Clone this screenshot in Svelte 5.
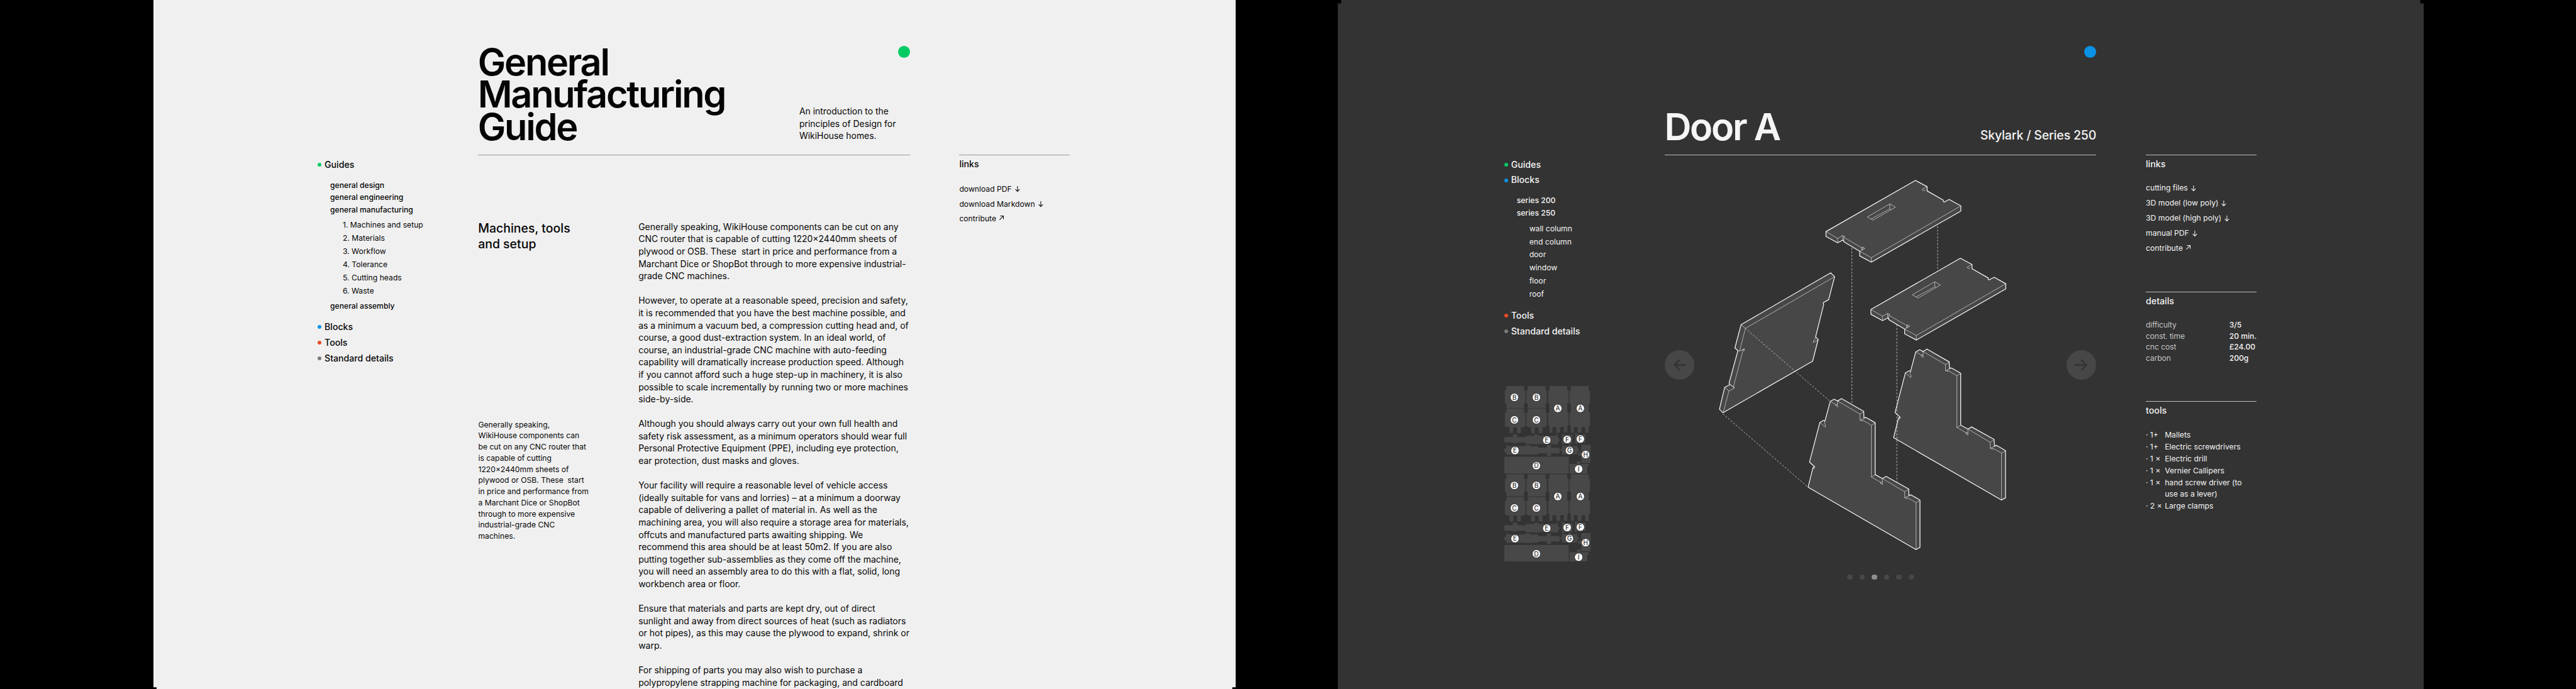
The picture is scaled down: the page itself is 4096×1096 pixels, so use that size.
<script>
  const guideNav = [
    {
      label: 'Guides',
      color: 'green',
      items: [
        { label: 'general design' },
        { label: 'general engineering' },
        {
          label: 'general manufacturing',
          items: ['1. Machines and setup', '2. Materials', '3. Workflow', '4. Tolerance', '5. Cutting heads', '6. Waste']
        },
        { label: 'general assembly' }
      ]
    },
    { label: 'Blocks', color: 'blue' },
    { label: 'Tools', color: 'red' },
    { label: 'Standard details', color: 'grey' }
  ];

  const blockNav = [
    { label: 'Guides', color: 'green' },
    {
      label: 'Blocks',
      color: 'blue',
      items: [
        { label: 'series 200' },
        { label: 'series 250', items: ['wall column', 'end column', 'door', 'window', 'floor', 'roof'] }
      ]
    },
    { label: 'Tools', color: 'red' },
    { label: 'Standard details', color: 'grey' }
  ];

  const guideLinks = [
    { label: 'download PDF', icon: 'down' },
    { label: 'download Markdown', icon: 'down' },
    { label: 'contribute', icon: 'out' }
  ];

  const blockLinks = [
    { label: 'cutting files', icon: 'down' },
    { label: '3D model (low poly)', icon: 'down' },
    { label: '3D model (high poly)', icon: 'down' },
    { label: 'manual PDF', icon: 'down' },
    { label: 'contribute', icon: 'out' }
  ];

  const details = [
    ['difficulty', '3/5'],
    ['const. time', '20 min.'],
    ['cnc cost', '£24.00'],
    ['carbon', '200g']
  ];

  const tools = [
    ['1+', 'Mallets'],
    ['1+', 'Electric screwdrivers'],
    ['1 ×', 'Electric drill'],
    ['1 ×', 'Vernier Callipers'],
    ['1 ×', 'hand screw driver (to use as a lever)'],
    ['2 ×', 'Large clamps']
  ];

  const paragraphs = [
    'Generally speaking, WikiHouse components can be cut on any CNC router that is capable of cutting 1220×2440mm sheets of plywood or OSB. These\u00a0 start in price and performance from a Marchant Dice or ShopBot through to more expensive industrial-grade CNC machines.',
    'However, to operate at a reasonable speed, precision and safety, it is recommended that you have the best machine possible, and as a minimum a vacuum bed, a compression cutting head and, of course, a good dust-extraction system. In an ideal world, of course, an industrial-grade CNC machine with auto-feeding capability will dramatically increase production speed. Although if you cannot afford such a huge step-up in machinery, it is also possible to scale incrementally by running two or more machines side-by-side.',
    'Although you should always carry out your own full health and safety risk assessment, as a minimum operators should wear full Personal Protective Equipment (PPE), including eye protection, ear protection, dust masks and gloves.',
    'Your facility will require a reasonable level of vehicle access (ideally suitable for vans and lorries) – at a minimum a doorway capable of delivering a pallet of material in. As well as the machining area, you will also require a storage area for materials, offcuts and manufactured parts awaiting shipping. We recommend this area should be at least 50m2. If you are also putting together sub-assemblies as they come off the machine, you will need an assembly area to do this with a flat, solid, long workbench area or floor.',
    'Ensure that materials and parts are kept dry, out of direct sunlight and away from direct sources of heat (such as radiators or hot pipes), as this may cause the plywood to expand, shrink or warp.',
    'For shipping of parts you may also wish to purchase a polypropylene strapping machine for packaging, and cardboard'
  ];

  const badges = [
    ['B', 149, 128], ['B', 304, 128], ['A', 455, 206], ['A', 614, 206], ['C', 149, 287], ['C', 304, 287],
    ['E', 377, 430], ['F', 521, 425], ['F', 614, 422], ['E', 153, 503], ['G', 537, 503], ['H', 651, 532],
    ['D', 304, 610], ['I', 602, 634]
  ];

  const slides = [0, 1, 2, 3, 4, 5];
  let current = $state(2);
</script>

{#snippet nav(sections)}
  <nav>
    {#each sections as section}
      <div class="section"><i class="dot {section.color}"></i>{section.label}</div>
      {#if section.items}
        <ul class="pages">
          {#each section.items as page}
            <li>
              <span>{page.label}</span>
              {#if page.items}
                <ul class="topics">
                  {#each page.items as topic}<li>{topic}</li>{/each}
                </ul>
              {/if}
            </li>
          {/each}
        </ul>
      {/if}
    {/each}
  </nav>
{/snippet}

{#snippet linkList(links)}
  <section class="card">
    <h3>links</h3>
    <ul class="links">
      {#each links as link}
        <li>
          <span>{link.label}</span>
          {#if link.icon === 'down'}
            <svg class="down" viewBox="0 0 12 14"><path d="M6 0V13M0.8 7.8L6 13L11.2 7.8" /></svg>
          {:else}
            <svg class="out" viewBox="0 0 11 11"><path d="M0.6 10.4L10 1M2 0.9H10.1V9" /></svg>
          {/if}
        </li>
      {/each}
    </ul>
  </section>
{/snippet}

{#snippet plate()}
  <path class="solid" d="M754 -316L1385 -677L1467 -633V-603L1581 -538V-530L1587 -524L1623 -543L1705 -497V-461L1074 -100L992 -144V-177L880 -244L875 -257L836 -237L754 -282Z" />
  <path class="thin" d="M754 -316L836 -268V-237M836 -268L872 -288V-257M872 -288L888 -281L880 -275V-246M880 -275L1005 -203V-187M1005 -203L1013 -207V-191L1005 -187M1013 -207L1028 -197L992 -177L1074 -132V-100M1074 -132L1705 -497" />
  <path class="thin" d="M1467 -633L1431 -612L1446 -603L1455 -610M1204 -511L1244 -488L1086 -396L1046 -419ZM1204 -511V-476L1072 -404M1204 -476L1214 -470" />
{/snippet}

{#snippet side()}
  <path class="solid" d="M784 882L812 866L836 879L863 862L1020 952L1022 998L1036 995L1101 1032V1398L1152 1426L1178 1411L1337 1499L1339 1546L1354 1541L1417 1578V1911L1389 1927L628 1487L662 1350L674 1343L638 1310L711 1030L738 1015L747 1020Z" />
  <path class="thin" d="M784 882L828 907M836 879V921L820 908L836 900M836 879L994 971L1020 955M994 971V1014L1010 1021V1012M994 1014L1036 995M1012 1013L1074 1050L1101 1034M1074 1050V1415L1101 1399M1074 1415L1146 1456M1152 1426V1469L1136 1457L1152 1448M1152 1426L1309 1519L1337 1501M1309 1519V1561L1325 1569V1560M1309 1561L1354 1541M1328 1561L1389 1596L1417 1580M1389 1596V1927" />
  <path class="thin" d="M711 1030L749 1063L751 1048L744 1040L747 1020M662 1350L671 1357L674 1343" />
{/snippet}

{#snippet sheet()}
  <path d="M92 48H217V76L227 81V171H217V204H92V171H82V81L92 76Z" />
  <path d="M92 208H217V236H227V331L217 333V339H195V374Q195 381 188 381H175Q168 381 168 374V345Q168 339 154 339Q140 339 140 345V374Q140 381 133 381H122Q115 381 115 374V339H92V333L82 331V236H92Z" />
  <path d="M243 48H369V76L378 81V171H369V204H243V171H234V81L243 76Z" />
  <path d="M243 208H369V236H378V331L369 333V339H347V374Q347 381 340 381H327Q320 381 320 374V345Q320 339 306 339Q292 339 292 345V374Q292 381 285 381H274Q267 381 267 374V339H243V333L234 331V236H243Z" />
  <path d="M396 48H522V78L531 81V171H522V235H531V325L522 330V377H498V348Q498 335 485 335Q471 335 471 348V377H444V348Q444 335 430 335Q417 335 417 348V377H396V330L387 325V235H396V171H387V81L396 78Z" />
  <path d="M547 48H673V78L682 81V171H673V235H682V325L673 330V377H649V348Q649 335 636 335Q622 335 622 348V377H595V348Q595 335 581 335Q568 335 568 348V377H547V330L538 325V235H547V171H538V81L547 78Z" />
  <path d="M78 408H138V389H168V408H228V399H288V390H318V399H442V390H455V415L466 418V437L455 440V460H442V457H318V460H288V457H228V446H168V451H138V446H78Z" />
  <path d="M78 490L92 487V465H106V473H228V465H258V473H318V484H378V465H408V484H468V522H408V540H378V522H318V531H258V534H228V531H106V534H92V517L78 513Z" />
  <path d="M484 386H498V393H558V456H498V462H484ZM576 381H590V390H651V448H590V457H576Z" />
  <path d="M485 470H530V462H550V470H592V487L602 492V506L592 510V530H485V510L476 506V492L485 489Z" />
  <path d="M620 463H686V591H620V540H600V515H620ZM78 547H532V665H78ZM538 598H590V578H613V598H672V614H663V665H538Z" />
{/snippet}

{#snippet marks()}
  {#each badges as [letter, x, y]}
    <circle class="mark" cx={x} cy={y} r="29" />
    <text x={x} y={y + 16.5}>{letter}</text>
  {/each}
{/snippet}

<div class="board">
  <article class="screen light">
    {@render nav(guideNav)}
    <main>
      <header>
        <h1>General<br />Manufacturing<br />Guide</h1>
        <div class="aside">
          <i class="status green"></i>
          <p class="intro">An introduction to the principles of Design for WikiHouse homes.</p>
        </div>
      </header>
      <div class="content">
        <div class="margin">
          <h2>Machines, tools and setup</h2>
          <p class="note">{paragraphs[0]}</p>
        </div>
        <div class="prose">
          {#each paragraphs as text}<p>{text}</p>{/each}
        </div>
      </div>
    </main>
    <aside>{@render linkList(guideLinks)}</aside>
  </article>

  <article class="screen dark">
    <div class="left">
      {@render nav(blockNav)}
      <svg class="sheet" viewBox="78 48 609 1240">
        {@render sheet()}
        <g transform="translate(0 622.5)">{@render sheet()}</g>
        {@render marks()}
        <g transform="translate(0 621.5)">{@render marks()}</g>
      </svg>
    </div>
    <main>
      <header>
        <h1>Door A</h1>
        <div class="aside">
          <i class="status blue"></i>
          <p class="series">Skylark / Series 250</p>
        </div>
      </header>
      <div class="stage">
        <button aria-label="previous" onclick={() => (current = (current + 5) % 6)}>
          <svg viewBox="0 0 30 28"><path d="M30 14H3M15 1.5L2.5 14L15 26.5" /></svg>
        </button>
        <svg class="model" viewBox="-6 -690 2040 2630">
          <path class="dash" d="M937 -200V915M1541 -354V-46M28 970L628 1487" />
          {@render plate()}
          <g transform="translate(317 549)">{@render plate()}</g>
          <path class="solid" d="M155 341L787 -25L815 2L773 164L735 186L738 198L681 427L699 445L660 598L28 962L3 937L40 783L76 763L71 752L133 524L112 505Z" />
          <path class="thin" d="M155 341L186 367L815 2M186 367L145 527L133 524M145 527L179 511L175 528L163 520L179 511M167 530L103 772L108 788L70 808L40 783M70 808L30 960M76 763L108 788M79 762L105 780M681 430L678 440L668 452L664 467L699 448" />
          {@render side()}
          <g transform="translate(603 -349)">{@render side()}</g>
          <path class="dash" d="M186 367L784 882M1254 340V1450" />
        </svg>
        <button class="next" aria-label="next" onclick={() => (current = (current + 1) % 6)}>
          <svg viewBox="0 0 30 28"><path d="M0 14H27M15 1.5L27.5 14L15 26.5" /></svg>
        </button>
      </div>
      <div class="pager">
        {#each slides as slide}<i class:active={slide === current}></i>{/each}
      </div>
    </main>
    <aside>
      {@render linkList(blockLinks)}
      <section class="card">
        <h3>details</h3>
        <dl>
          {#each details as [name, value]}<dt>{name}</dt><dd>{value}</dd>{/each}
        </dl>
      </section>
      <section class="card">
        <h3>tools</h3>
        <ul class="tools">
          {#each tools as [count, name]}
            <li><span>·</span><span>{count}</span><span>{name}</span></li>
          {/each}
        </ul>
      </section>
    </aside>
  </article>
</div>

<style>
  :global(html),
  :global(body) {
    margin: 0;
    overflow: hidden;
    background: #000;
  }
  .board {
    zoom: 0.67658;
    box-sizing: border-box;
    width: 6054px;
    height: 1620px;
    padding: 0 358px 0 360px;
    display: flex;
    justify-content: space-between;
    overflow: hidden;
    background: #000;
    font: 400 18px 'Inter', 'Liberation Sans', sans-serif;
  }
  h1, h2, h3, p, ul, dl, dd { margin: 0; padding: 0; }
  ul { list-style: none; }
  .screen {
    box-sizing: border-box;
    height: 1620px;
    display: grid;
    grid-template-columns: 377px 1014px 116.6px 260px;
    overflow: hidden;
  }
  .light {
    width: 2544px;
    padding-left: 387px;
    background: #f0f0f0;
    color: #050505;
    --rule: #989998;
    clip-path: polygon(0 0, 100% 0, 100% 1616px, calc(100% - 8px) 1616px, calc(100% - 8px) 100%, 8px 100%, 8px 1616px, 0 1616px);
  }
  .dark {
    width: 2552px;
    padding-left: 391.5px;
    background: #333;
    color: #f5f5f5;
    --rule: #bcbcbc;
    clip-path: polygon(8px 0, calc(100% - 8px) 0, calc(100% - 8px) 8px, 100% 8px, 100% 100%, 0 100%, 0 8px, 8px 8px);
  }
  .screen aside { grid-column: 4; padding-top: 363.5px; }

  nav { padding-top: 368.8px; }
  .section {
    display: flex;
    align-items: center;
    gap: 6.8px;
    font-size: 20.9px;
    font-weight: 500;
    line-height: 36.8px;
  }
  .dot { width: 9px; height: 9px; border-radius: 50%; }
  .green { background: #05cb63; }
  .blue { background: #0b92e5; }
  .red { background: #ee4c25; }
  .grey { background: #7a7a7a; }
  .pages { padding: 15px 0 16.5px 29px; }
  .pages > li { line-height: 28.9px; font-weight: 500; }
  .pages > li > span { display: block; }
  .topics { padding: 7.8px 0 5.4px 29.5px; font-weight: 400; line-height: 30.8px; }
  .pages > li:last-child > .topics { padding-bottom: 0; }

  header {
    box-sizing: border-box;
    height: 365.5px;
    padding: 107.5px 0 28.5px;
    border-bottom: 2px solid var(--rule);
    display: flex;
    justify-content: space-between;
    align-items: flex-end;
  }
  h1 {
    margin-left: -1px;
    font-size: 88px;
    font-weight: 600;
    line-height: 76px;
    letter-spacing: -3.45px;
  }
  .aside {
    height: 100%;
    display: flex;
    flex-direction: column;
    justify-content: space-between;
  }
  .status { align-self: flex-end; width: 28px; height: 28px; border-radius: 50%; }
  .intro { width: 259.5px; font-size: 20.6px; line-height: 29px; }
  .series { font-size: 28.8px; font-weight: 500; letter-spacing: -0.22px; line-height: 36px; }

  .content {
    display: grid;
    grid-template-columns: 376.5px 637.5px;
    padding-top: 153px;
  }
  h2 { width: 240px; margin-left: -0.5px; padding-top: 1px; font-size: 28.8px; font-weight: 500; line-height: 36px; }
  .note { width: 262px; margin-top: 394px; line-height: 26.2px; }
  .prose { font-size: 20.68px; line-height: 28.95px; }
  .prose p + p { margin-top: 28.95px; }

  .card { border-top: 2px solid var(--rule); padding-top: 6.5px; }
  h3 { font-size: 21px; font-weight: 500; line-height: 30px; }
  .links { margin-top: 25.5px; line-height: 35px; }
  .dark .links { margin-top: 23px; margin-bottom: 84px; line-height: 35.4px; }
  .links li { display: flex; align-items: baseline; gap: 7.2px; }
  .links svg { fill: none; stroke: currentColor; stroke-width: 1.6; overflow: visible; position: relative; }
  .down { width: 11.5px; height: 13.5px; top: 1px; }
  .out { width: 10.5px; height: 10.5px; top: -2.6px; }
  dl {
    display: grid;
    grid-template-columns: 196px 1fr;
    margin: 28px 0 87.5px;
    line-height: 25.9px;
    white-space: nowrap;
  }
  dt { font-weight: 300; color: #e4e4e4; }
  dd { font-weight: 500; }
  .tools { margin-top: 29.7px; line-height: 26.2px; }
  .tools li { display: grid; grid-template-columns: 10px 34.5px 190px; margin-bottom: 1.9px; }

  .sheet { display: block; width: 203px; height: 413.3px; margin-top: 109.5px; fill: #484848; }
  .left nav .pages { padding-bottom: 16px; }
  .mark { fill: #fafafa; stroke: #141414; stroke-width: 3.5; }
  .sheet text { fill: #111; font-size: 45px; text-anchor: middle; }

  .stage { display: flex; align-items: center; padding-top: 54.5px; }
  .stage button {
    width: 70px;
    height: 70px;
    padding: 0;
    border: 0;
    border-radius: 50%;
    background: #474747;
    display: grid;
    place-items: center;
  }
  .stage .next { margin-left: auto; }
  button svg { width: 30px; height: 28px; fill: none; stroke: #333; stroke-width: 3.6; }
  .model { width: 680px; height: 876.7px; margin-left: 55.5px; stroke: #fafafa; }
  .solid { fill: #474747; stroke-width: 5.4; stroke-linejoin: round; }
  .thin { fill: none; stroke-width: 2.6; }
  .dash { fill: none; stroke-width: 3; stroke-dasharray: 13 11; }
  .pager { display: flex; justify-content: center; gap: 16.2px; margin-top: 54px; }
  .pager i { width: 12.6px; height: 12.6px; border-radius: 50%; background: #484848; }
  .pager .active { background: #8f8f8f; }
</style>
